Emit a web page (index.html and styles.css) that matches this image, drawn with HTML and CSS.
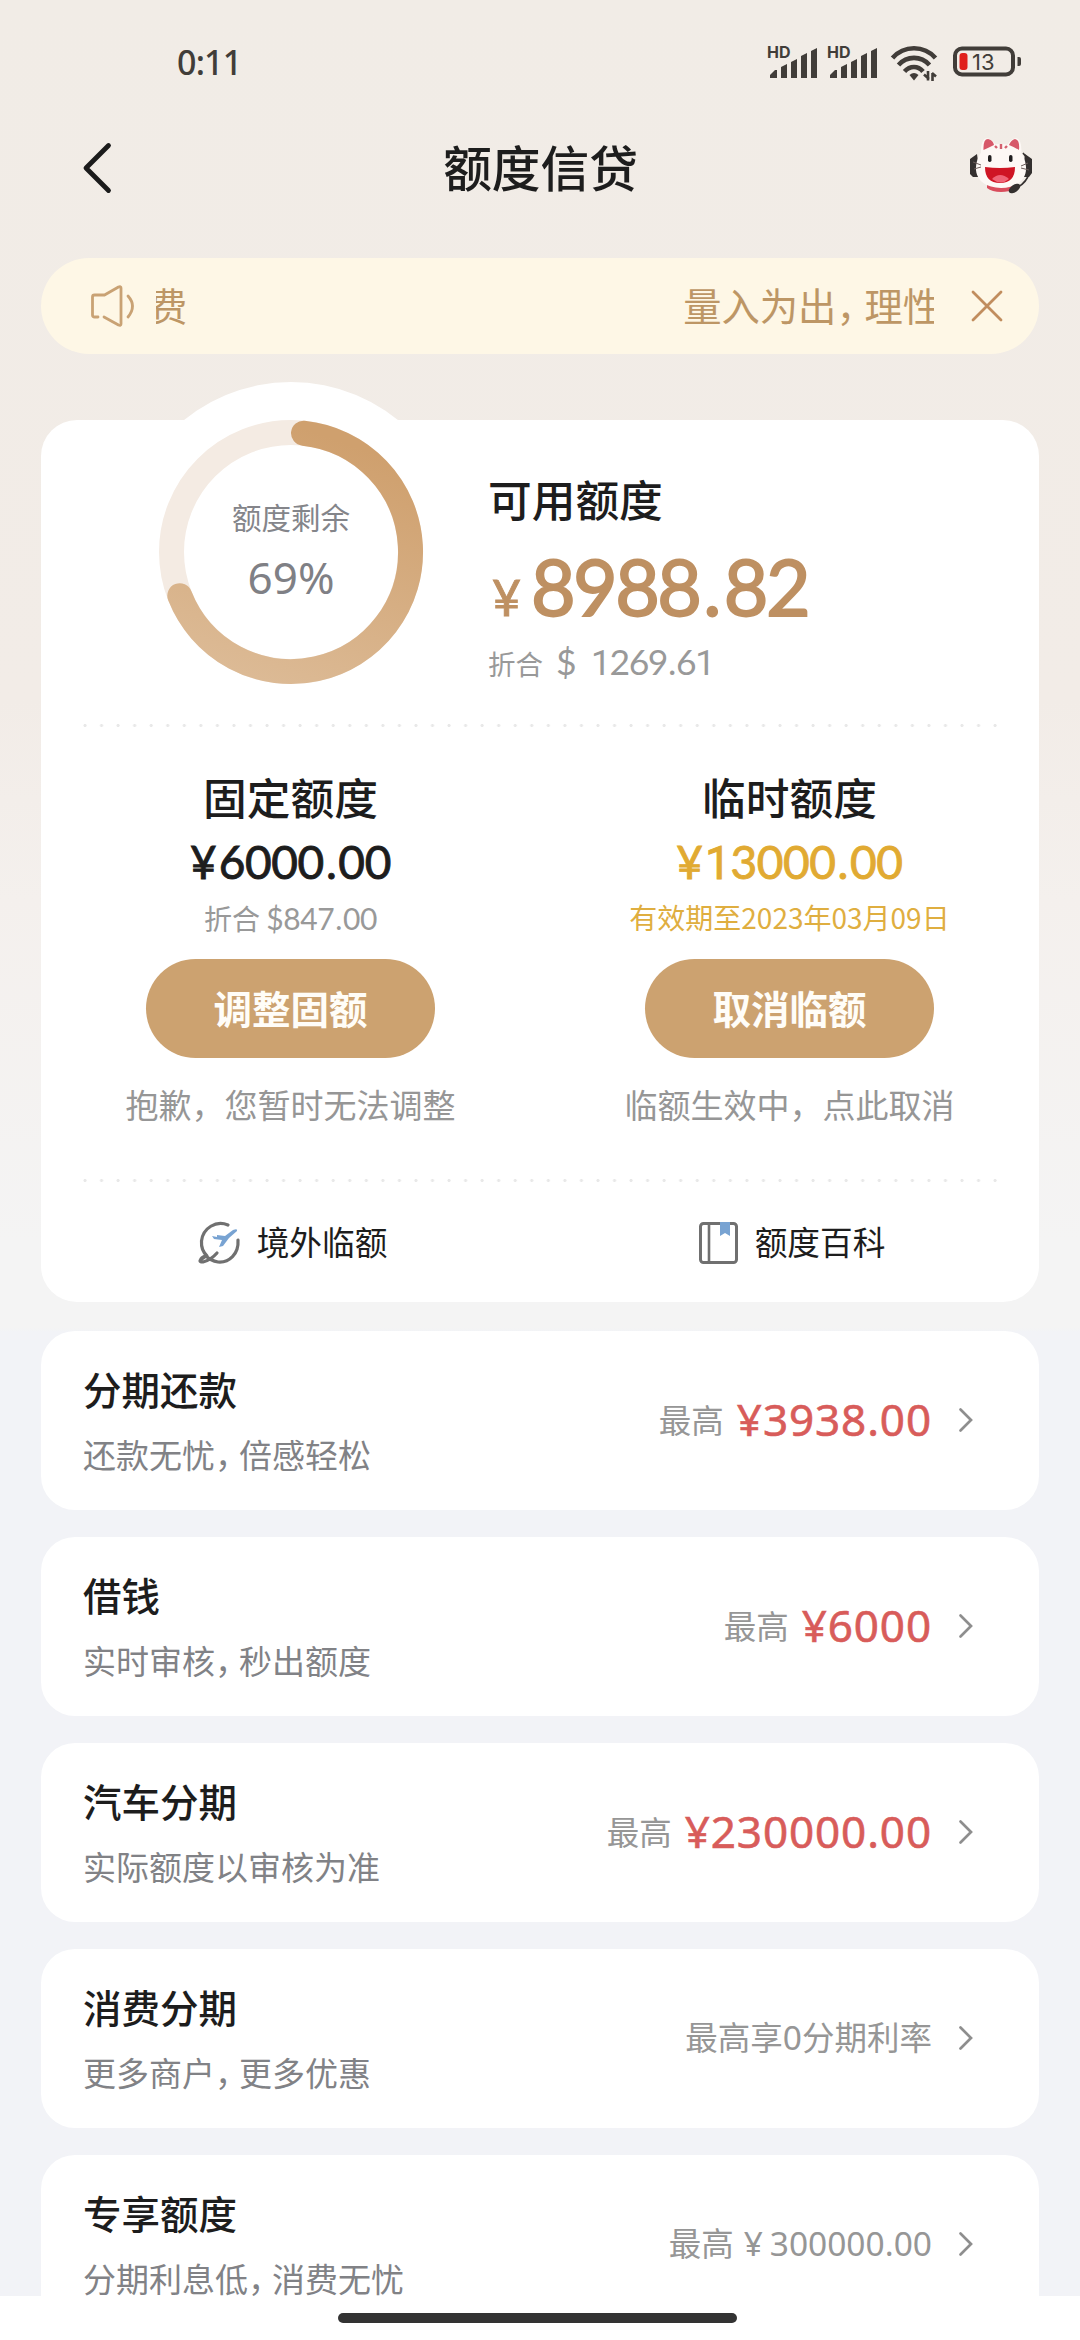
FILE: index.html
```html
<!DOCTYPE html>
<html lang="zh-CN">
<head>
<meta charset="utf-8">
<title>额度信贷</title>
<link rel="stylesheet" href="styles.css">
</head>
<body>
<div class="phone">
  <header class="status">
    <span class="clock">0:11</span>
    <div class="status-icons">
      <svg class="signal" width="52" height="36" viewBox="0 0 52 36">
        <text class="hd" x="-1" y="14">HD</text>
        <g fill="#413d39"><path d="M2 34v-3l5-5h2v8z"/><path d="M13 34V23l6-3v14z"/><path d="M23 34V18l6-3v19z"/><path d="M33 34V12l6-3v25z"/><path d="M43 34V7l6-3v30z"/></g>
      </svg>
      <svg class="signal" width="52" height="36" viewBox="0 0 52 36">
        <text class="hd" x="-1" y="14">HD</text>
        <g fill="#413d39"><path d="M2 34v-3l5-5h2v8z"/><path d="M13 34V23l6-3v14z"/><path d="M23 34V18l6-3v19z"/><path d="M33 34V12l6-3v25z"/><path d="M43 34V7l6-3v30z"/></g>
      </svg>
      <svg class="wifi" width="48" height="36" viewBox="0 0 48 36">
        <g fill="none" stroke="#413d39" stroke-width="4.6"><path d="M2.500 13C14 0 34 0 45.500 13"/><path d="M8.500 20C17 10.500 31 10.500 39.500 20"/><path d="M14.500 26.500C20 20.500 28 20.500 33 26.500"/></g>
        <path d="M19.500 30q4.500-4 9 0L24 35.500z" fill="#413d39"/>
        <path d="M34 29.500l5 4.500M38 26v9.500M42.500 36v-8M42 28l4 3.500" fill="none" stroke="#413d39" stroke-width="2.600"/>
      </svg>
      <svg class="battery" width="70" height="32" viewBox="0 0 70 32">
        <rect x="2" y="2.500" width="58" height="26" rx="7" fill="none" stroke="#413d39" stroke-width="4"/>
        <rect x="6.500" y="7" width="8" height="17" rx="3" fill="#e0201c"/>
        <path d="M64.500 11h1.500q2 0 2 2v5q0 2-2 2h-1.500z" fill="#413d39"/>
        <text class="level" x="19" y="23.500">13</text>
      </svg>
    </div>
  </header>

  <nav class="nav">
    <svg class="back" width="30" height="52" viewBox="0 0 30 52"><path d="M26.500 3.500L4 26l22.500 22.500" fill="none" stroke="#1b1b1b" stroke-width="4.800" stroke-linecap="round" stroke-linejoin="round"/></svg>
    <h1>额度信贷</h1>
    <svg class="mascot" width="64" height="57" viewBox="0 0 64 57">
      <path d="M8 17L1 22v15l3 3h7zM56 17l7 5v14l-3 4h-7z" fill="#34302f"/>
      <path d="M18 48h27v4q-5 3-13 3-9 0-14-4z" fill="#d94c5c"/>
      <path d="M32 7C48 7 56 17 57 30 58 43 47 51 32 51S6 43 7 30C8 17 16 7 32 7z" fill="#fdf8f5"/>
      <path d="M12 20Q11 2 18 1q6 1 9 8zM38 9q3-7 9-8 7 2 5 19z" fill="#fdf8f5"/>
      <path d="M14.500 13Q14 2 19 2q5 1 6 6-6 3-10.500 5zM40 8q2-5 6-6 5 1 4 11-5-3-10-5z" fill="#d75869"/>
      <path d="M32 7v5M26 9l2 2M38 9l-2 2" stroke="#d4606e" stroke-width="2.400"/>
      <rect x="19" y="18" width="3.500" height="7" rx="1.700" fill="#211f20"/><rect x="40" y="18" width="3.500" height="7" rx="1.700" fill="#211f20"/>
      <path d="M16 30q15 2 30 0 0 16-15 16T16 30z" fill="#cf1524"/>
      <path d="M23 42q8-8 17 0-8 7-17 0z" fill="#ef6476"/>
      <path d="M4 25l8 3M5 32l7-2M59 26l-7 3M60 33l-8-2" stroke="#6a5b59" stroke-width="1"/>
      <path d="M60 36Q58 45 49 50M54 16l4 5" fill="none" stroke="#34302f" stroke-width="1.600"/>
      <ellipse cx="45.500" cy="51.500" rx="6.500" ry="3.600" transform="rotate(-35 45.500 51.500)" fill="#34302f"/>
    </svg>
  </nav>

  <section class="notice">
    <svg class="speaker" width="46" height="44" viewBox="0 0 46 44" fill="none" stroke="#c9a274" stroke-width="2.800" stroke-linecap="round" stroke-linejoin="round"><path d="M7 33H3.500q-2 0-2-2V13q0-2 2-2h10L27.500 3q2.500-1 2.500 1v36q0 2-2.500 1L13 33"/><path d="M37 12q9 10 0 21"/></svg>
    <div class="marquee"><span class="old">费</span><span>量入为出<span class="comma">，</span>理性</span></div>
    <svg class="close" width="34" height="34" viewBox="0 0 34 34"><path d="M3 3l28 28M31 3L3 31" stroke="#c18d5e" stroke-width="2.800" stroke-linecap="round"/></svg>
  </section>

  <main class="card">
    <section class="summary">
      <div class="gauge">
        <svg width="340" height="340" viewBox="0 0 340 340">
          <defs><linearGradient id="arc" x1="0.600" y1="0" x2="0.250" y2="1"><stop offset="0" stop-color="#cfa06e"/><stop offset="1" stop-color="#dcba95"/></linearGradient></defs>
          <circle cx="170" cy="170" r="170" fill="#fff"/>
          <circle cx="170" cy="170" r="119.500" fill="none" stroke="#f4ebe3" stroke-width="25"/>
          <path d="M182.500 51.200A119.500 119.500 0 1 1 58.800 213.700" fill="none" stroke="url(#arc)" stroke-width="25" stroke-linecap="round"/>
        </svg>
        <div class="gauge-text"><span class="gauge-label">额度剩余</span><span class="gauge-value">69%</span></div>
      </div>
      <div class="available">
        <h2>可用额度</h2>
        <p class="total"><span class="yen">¥</span>8988<span class="dot">.</span>82</p>
        <p class="usd">折合<span class="usd-value">$ <i>1</i>269<span class="dot">.</span>6<i>1</i></span></p>
      </div>
    </section>
    <div class="dots"></div>
    <section class="limits">
      <div class="limit">
        <h2>固定额度</h2>
        <p class="money">¥6000<span class="dot">.</span>00</p>
        <p class="detail">折合 <span class="num">$847<span class="dot">.</span>00</span></p>
        <button>调整固额</button>
        <p class="hint">抱歉，您暂时无法调整</p>
      </div>
      <div class="limit temporary">
        <h2>临时额度</h2>
        <p class="money">¥<i>1</i>3000<span class="dot">.</span>00</p>
        <p class="detail">有效期至2023年03月09日</p>
        <button>取消临额</button>
        <p class="hint">临额生效中，点此取消</p>
      </div>
    </section>
    <div class="dots"></div>
    <section class="links">
      <div class="link">
        <svg width="44" height="44" viewBox="0 0 44 44" fill="none"><path d="M30 4C18-1 5 7 3.500 20 3 27 5 31 9 35M40 19C41 33 31 42 20 41 15 40 10 37 8 35L2.500 39Q1 41 5 41 13 39 19 32M8 35Q3 36 2.500 39" stroke="#707070" stroke-width="3.200" stroke-linecap="round"/><path d="M19 14l8 1 8-6q5-2 4 1l-8 7-6 8-4 1 3-7-8-1-2-3 5 1z" fill="#78a3d2"/></svg>
        <span>境外临额</span>
      </div>
      <div class="link">
        <svg width="42" height="44" viewBox="0 0 42 44" fill="none"><rect x="2.500" y="2.500" width="36" height="39" rx="3" stroke="#707070" stroke-width="3"/><path d="M11 2v40" stroke="#707070" stroke-width="2.600"/><path d="M22 1h10v14l-5-3-5 3z" fill="#78a3d2"/></svg>
        <span>额度百科</span>
      </div>
    </section>
  </main>

  <div class="list">
    <section class="row">
      <div class="row-text"><h3>分期还款</h3><p>还款无忧<span class="comma">，</span>倍感轻松</p></div>
      <div class="offer"><span>最高</span><b>¥3938.00</b></div>
      <svg class="chevron" width="16" height="26" viewBox="0 0 16 26"><path d="M2.500 2.500L13 13 2.500 23.500" fill="none" stroke="#8e8e8e" stroke-width="2.700" stroke-linecap="round"/></svg>
    </section>
    <section class="row">
      <div class="row-text"><h3>借钱</h3><p>实时审核<span class="comma">，</span>秒出额度</p></div>
      <div class="offer"><span>最高</span><b>¥6000</b></div>
      <svg class="chevron" width="16" height="26" viewBox="0 0 16 26"><path d="M2.500 2.500L13 13 2.500 23.500" fill="none" stroke="#8e8e8e" stroke-width="2.700" stroke-linecap="round"/></svg>
    </section>
    <section class="row">
      <div class="row-text"><h3>汽车分期</h3><p>实际额度以审核为准</p></div>
      <div class="offer"><span>最高</span><b>¥230000.00</b></div>
      <svg class="chevron" width="16" height="26" viewBox="0 0 16 26"><path d="M2.500 2.500L13 13 2.500 23.500" fill="none" stroke="#8e8e8e" stroke-width="2.700" stroke-linecap="round"/></svg>
    </section>
    <section class="row">
      <div class="row-text"><h3>消费分期</h3><p>更多商户<span class="comma">，</span>更多优惠</p></div>
      <div class="offer"><span>最高享<span class="plain">0</span>分期利率</span></div>
      <svg class="chevron" width="16" height="26" viewBox="0 0 16 26"><path d="M2.500 2.500L13 13 2.500 23.500" fill="none" stroke="#8e8e8e" stroke-width="2.700" stroke-linecap="round"/></svg>
    </section>
    <section class="row">
      <div class="row-text"><h3>专享额度</h3><p>分期利息低<span class="comma">，</span>消费无忧</p></div>
      <div class="offer"><span>最高<span class="plain gap">¥ 300000.00</span></span></div>
      <svg class="chevron" width="16" height="26" viewBox="0 0 16 26"><path d="M2.500 2.500L13 13 2.500 23.500" fill="none" stroke="#8e8e8e" stroke-width="2.700" stroke-linecap="round"/></svg>
    </section>
  </div>

  <footer class="home"><div class="home-bar"></div></footer>
</div>
</body>
</html>
```
FILE: styles.css
```css
* { box-sizing: border-box; margin: 0; padding: 0; }
svg { display: block; flex: none; overflow: visible; }
i { font-style: normal; font-family: Roboto, sans-serif; line-height: 1; }

body { font-family: "Noto Sans CJK SC", sans-serif; color: #1d1d1d; }

.phone {
  width: 1080px;
  height: 2340px;
  overflow: hidden;
  display: flex;
  flex-direction: column;
  background: linear-gradient(#f1ece6 0, #f2ece7 700px, #f4f0ed 900px, #f4f4f4 1240px, #f4f4f4 1328px, #f2f3f7 1332px);
}

/* status bar */
.status {
  height: 104px;
  flex: none;
  padding: 0 57px 0 177px;
  display: flex;
  justify-content: space-between;
  align-items: flex-start;
}
.clock {
  margin-top: 36px;
  font: 500 34px/52px "Noto Sans", sans-serif;
  letter-spacing: -0.800px;
  color: #413d39;
}
.status-icons { display: flex; padding-top: 44px; }
.signal { margin-right: 8px; }
.hd { font: 700 16px Inter, sans-serif; fill: #413d39; }
.wifi { margin: 1px 15px 0 2px; }
.battery { margin-top: 2px; }
.level { font: 400 22px Inter, sans-serif; fill: #413d39; }

/* title bar */
.nav {
  height: 128px;
  flex: none;
  padding: 0 47px 0 82px;
  display: grid;
  grid-template-columns: 30px 1fr 64px;
  align-items: center;
}
.back { margin-top: -1px; }
.nav h1 {
  font-size: 48.700px;
  font-weight: 500;
  line-height: 70px;
  text-align: center;
  margin: -5px 0 0 0;
}
.mascot { margin-top: -5px; }

/* notice */
.notice {
  height: 96px;
  flex: none;
  margin: 26px 41px 0;
  padding: 0 36px 0 50px;
  border-radius: 48px;
  background: #fef7e6;
  display: flex;
  align-items: center;
  color: #bd9665;
}
.speaker { margin-right: 19px; }
.marquee {
  width: 778px;
  margin-right: 36px;
  margin-top: -3px;
  overflow: hidden;
  display: flex;
  flex: none;
  justify-content: space-between;
  font-size: 38.300px;
  line-height: 60px;
  white-space: nowrap;
}
.marquee > span:last-child { margin-right: -7px; }
.marquee .old { margin-left: -7px; }
.comma { letter-spacing: -0.270em; }

/* main card */
.card {
  margin: 66px 41px 29px;
  height: 882px;
  flex: none;
  background: #fff;
  border-radius: 36px;
}
.summary { height: 304px; display: flex; padding-left: 80px; }
.gauge { display: grid; margin-top: -38px; width: 340px; height: 340px; }
.gauge > * { grid-area: 1 / 1; }
.gauge-text { display: flex; flex-direction: column; align-items: center; padding-top: 109px; }
.gauge-label { font-size: 29.500px; line-height: 50px; color: #84858a; }
.gauge-value { font: 400 44px/60px "Noto Sans", sans-serif; color: #7f8085; margin-top: 6px; }
.available { margin-left: 27px; padding-top: 48px; }
.card h2 { font-size: 43.700px; line-height: 60px; font-weight: 500; }
.total {
  margin-top: 18px;
  height: 80px;
  font: 400 77px/80px Lato, sans-serif;
  letter-spacing: -2.600px;
  color: #be9062;
  -webkit-text-stroke: 1.800px #be9062;
}
.total .dot { padding: 0 5px 0 4px; }
.yen { font-size: 50px; letter-spacing: 0; margin: 0 10px 0 4px; -webkit-text-stroke-width: 1px; }
.usd { margin-top: 14px; height: 44px; font-size: 27.500px; line-height: 44px; color: #999; }
.usd-value { font-family: Lato, sans-serif; font-size: 35.500px; letter-spacing: -1.400px; margin-left: 13px; word-spacing: 8px; }
.usd-value .dot { padding: 0 1px; }

.dots {
  height: 3px;
  margin: 0 42px;
  background: radial-gradient(circle at 2px 1.500px, #e8e8e8 1.200px, transparent 1.900px) 0 0 / 16.550px 3px repeat-x;
}

.limits { display: grid; grid-template-columns: 1fr 1fr; height: 452px; }
.limit { display: flex; flex-direction: column; align-items: center; padding-top: 39px; }
.money {
  margin-top: 11px;
  height: 50px;
  font: 400 46px/50px Lato, sans-serif;
  letter-spacing: -0.400px;
  -webkit-text-stroke: 0.900px currentColor;
}
.money::first-letter { letter-spacing: 2px; }
.money .dot { padding: 0 2px; }
.detail { margin-top: 11px; font-size: 28px; line-height: 40px; height: 40px; color: #999; }
.num { font-family: Lato, sans-serif; font-size: 30px; letter-spacing: -0.400px; }
.num .dot { padding: 0 1px; }
.limit button {
  margin-top: 21px;
  width: 289px;
  height: 99px;
  border: 0;
  border-radius: 50px;
  background: #cca270;
  color: #fffdf8;
  font: 700 38.500px/60px "Noto Sans CJK SC", sans-serif;
  padding-bottom: 4px;
}
.hint { margin-top: 26px; font-size: 33px; line-height: 40px; color: #969696; }
.temporary .money { color: #e1aa32; }
.temporary .detail { color: #dfae40; line-height: 38px; }

.links { display: grid; grid-template-columns: 1fr 1fr; height: 121px; }
.link { display: flex; justify-content: center; align-items: center; font-size: 32.700px; line-height: 50px; gap: 15px; padding-left: 4px; }
.link span { margin-top: -3px; }

/* products */
.list {
  flex: none;
  height: 965px;
  overflow: hidden;
  display: flex;
  flex-direction: column;
  gap: 27px;
  padding: 0 41px;
}
.row {
  height: 179px;
  flex: none;
  border-radius: 34px;
  background: #fff;
  display: flex;
  align-items: center;
  padding: 0 65px 0 42px;
}
.row-text { flex: 1; }
.row-text h3 { font-size: 38.500px; line-height: 56px; font-weight: 500; margin-top: -4px; }
.row-text p { font-size: 33px; line-height: 48px; margin-top: 14px; color: #818286; }
.offer { font-size: 32.500px; line-height: 60px; color: #969696; display: flex; align-items: center; }
.offer > span { margin-top: -4px; }
.offer b {
  font: 400 44px/60px "Noto Sans", sans-serif;
  color: #d85c5a;
  -webkit-text-stroke: 0.600px #d85c5a;
  letter-spacing: 0.900px;
  margin: -4px 0 0 13px;
}
.plain { font-family: "Noto Sans", sans-serif; font-size: 33.500px; }
.gap { margin-left: 10px; word-spacing: -2px; }
.chevron { margin: -2px 0 0 26px; }

.home { flex: none; height: 44px; background: #fff; display: flex; justify-content: center; padding-top: 17px; }
.home-bar { width: 399px; height: 10px; border-radius: 5px; background: #333; margin-left: -6px; }
```
